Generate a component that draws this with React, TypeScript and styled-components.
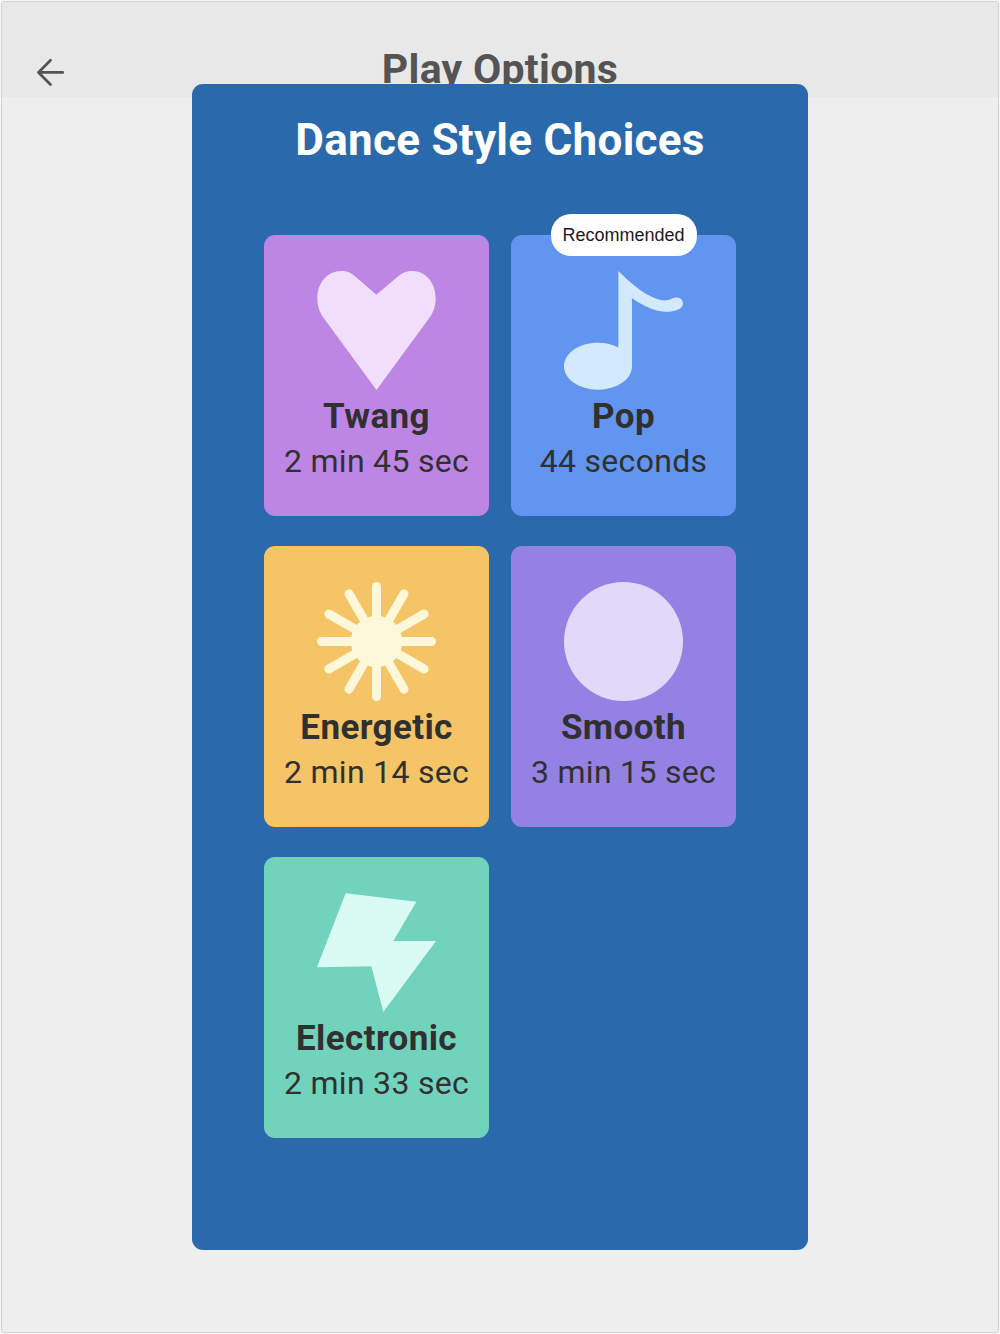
import React from "react";
import styled, { createGlobalStyle } from "styled-components";

const GlobalStyle = createGlobalStyle`
  *, *::before, *::after { box-sizing: border-box; }
  body { margin: 0; background: #f6f6f6; font-family: Roboto, "Liberation Sans", sans-serif; }
`;

const Screen = styled.div`
  position: relative;
  width: 1000px;
  height: 1334px;
  padding: 1px;
  overflow: hidden;
`;

const Page = styled.main`
  height: 1332px;
  width: 998px;
  background: #eeeeee;
  border: 1px solid #d3d3d3;
  border-radius: 3px;
  overflow: hidden;
`;

const Header = styled.header`
  display: grid;
  grid-template-columns: 100px 1fr 100px;
  height: 95px;
  padding-top: 43px;
  background: #e8e8e8;
  color: #545454;
`;

const BackButton = styled.button`
  display: flex;
  align-items: flex-start;
  padding: 12px 0 0 34px;
  border: 0;
  background: none;
  color: inherit;
`;

const PageTitle = styled.h1`
  margin: 0;
  text-align: center;
  font-size: 41px;
  line-height: 48px;
  font-weight: 700;
  letter-spacing: 0.28px;
  white-space: nowrap;
`;

const Overlay = styled.div`
  position: absolute;
  inset: 0;
  display: flex;
  align-items: flex-start;
  justify-content: center;
  padding-top: 83.5px;
`;

const Dialog = styled.section`
  display: flex;
  flex-direction: column;
  align-items: center;
  width: 615.5px;
  height: 1166.5px;
  padding-top: 31.5px;
  background: #2b69ad;
  border-radius: 11px;
`;

const DialogTitle = styled.h2`
  margin: 0 0 70px;
  color: #ffffff;
  font-size: 44px;
  line-height: 50px;
  font-weight: 700;
  letter-spacing: 0.28px;
  white-space: nowrap;
`;

const StyleGrid = styled.div`
  display: grid;
  grid-template-columns: repeat(2, 224.5px);
  grid-auto-rows: 281px;
  gap: 30px 22.5px;
`;

const Card = styled.button<{ $color: string }>`
  position: relative;
  display: flex;
  flex-direction: column;
  align-items: center;
  padding: 36px 0 0;
  border: 0;
  border-radius: 11px;
  background: ${(p) => p.$color};
  color: #303030;
  font-family: inherit;
`;

const Glyph = styled.svg<{ $tint: string }>`
  display: block;
  flex: none;
  width: 119px;
  height: 119px;
  fill: ${(p) => p.$tint};
`;

const StyleName = styled.span`
  margin-top: 6px;
  font-size: 35px;
  line-height: 41px;
  font-weight: 700;
  letter-spacing: 0.38px;
  white-space: nowrap;
`;

const Duration = styled.span`
  margin-top: 5px;
  font-size: 32px;
  line-height: 38px;
  letter-spacing: 0.3px;
  white-space: nowrap;
`;

const Badge = styled.span`
  position: absolute;
  top: -21px;
  left: 50%;
  transform: translateX(-50%);
  display: flex;
  align-items: center;
  justify-content: center;
  width: 146px;
  height: 42px;
  border-radius: 20px;
  background: #ffffff;
  color: #1a1a1a;
  font-family: "Liberation Sans", Arial, sans-serif;
  font-size: 18px;
`;

type Kind = "heart" | "note" | "burst" | "circle" | "bolt";

const viewBoxes: Record<Kind, string> = {
  heart: "51 47 357 359",
  note: "56 199 357 356",
  burst: "-178.5 -178.5 357 357",
  circle: "0 0 119 119",
  bolt: "51 38 357 357",
};

function Shape({ kind }: { kind: Kind }) {
  switch (kind) {
    case "heart":
      return (
        <path d="M229 119 L292 65 C309 51 320 47 337 47 C377 47 407 83 407 129 C407 150 402 168 389 187 L229.500 406 L70 187 C57 168 52 150 52 129 C52 83 82 47 124 47 C141 47 151 51 167 64 Z" />
      );
    case "note":
      return (
        <path d="M219 199 C267 247 320 287 359 287 C375 286 381 278 394 278 C405 278 413 286 413 297 C413 313 386 321 364 321 C329 321 293 304 260 280 V484 C260 523 214 554 158 554 C102 554 56 523 56 484 C56 445 102 414 158 414 C181 414 202 419 219 428 Z" />
      );
    case "burst":
      return (
        <>
          <circle r="77" />
          {Array.from({ length: 12 }, (_, i) => (
            <rect
              key={i}
              x="-13.5"
              y="-178.5"
              width="27"
              height="140"
              rx="13.5"
              transform={`rotate(${i * 30})`}
            />
          ))}
        </>
      );
    case "circle":
      return <circle cx="59.5" cy="59.5" r="59.5" />;
    case "bolt":
      return <path d="M137 39 L349 64 L280 182 H408 L250 395 L214 258 L51 261 Z" />;
  }
}

interface DanceStyle {
  name: string;
  time: string;
  kind: Kind;
  color: string;
  tint: string;
  recommended?: boolean;
}

const styles: DanceStyle[] = [
  { name: "Twang", time: "2 min 45 sec", kind: "heart", color: "#be86e4", tint: "#f1defc" },
  { name: "Pop", time: "44 seconds", kind: "note", color: "#6195ef", tint: "#d3eafe", recommended: true },
  { name: "Energetic", time: "2 min 14 sec", kind: "burst", color: "#f4c467", tint: "#fef8da" },
  { name: "Smooth", time: "3 min 15 sec", kind: "circle", color: "#9381e4", tint: "#e2d8f9" },
  { name: "Electronic", time: "2 min 33 sec", kind: "bolt", color: "#72d3bd", tint: "#d9fbf4" },
];

export default function App() {
  return (
    <Screen>
      <GlobalStyle />
      <Page>
        <Header>
          <BackButton aria-label="Back">
            <svg width="30" height="30" viewBox="0 0 30 30" fill="none" stroke="currentColor" strokeWidth="2.8" strokeLinecap="round" strokeLinejoin="round">
              <path d="M26.700 15.400H2.500M14.500 3.200L2.500 15.400L14.500 27.500" />
            </svg>
          </BackButton>
          <PageTitle>Play Options</PageTitle>
        </Header>
      </Page>
      <Overlay>
        <Dialog role="dialog">
          <DialogTitle>Dance Style Choices</DialogTitle>
          <StyleGrid>
            {styles.map((s) => (
              <Card key={s.name} $color={s.color}>
                {s.recommended && <Badge>Recommended</Badge>}
                <Glyph $tint={s.tint} viewBox={viewBoxes[s.kind]} preserveAspectRatio="none">
                  <Shape kind={s.kind} />
                </Glyph>
                <StyleName>{s.name}</StyleName>
                <Duration>{s.time}</Duration>
              </Card>
            ))}
          </StyleGrid>
        </Dialog>
      </Overlay>
    </Screen>
  );
}
